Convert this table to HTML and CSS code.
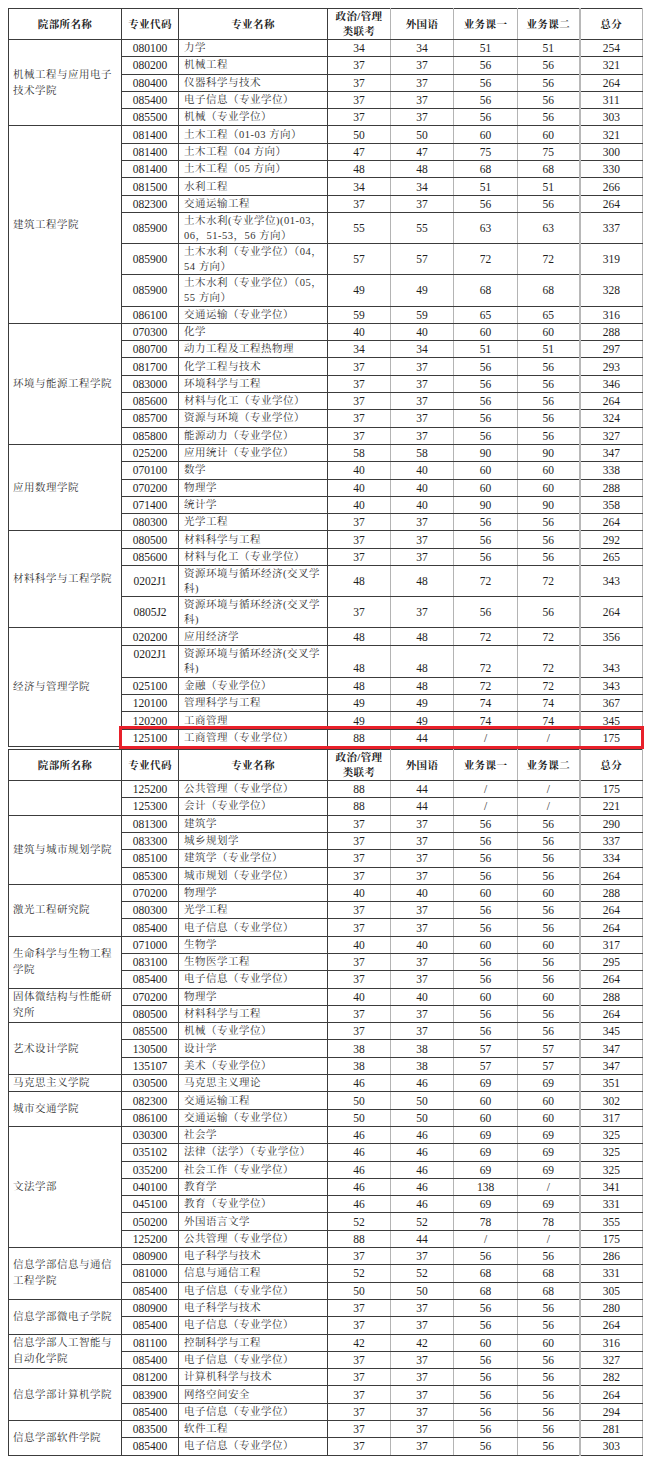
FILE: index.html
```html
<!DOCTYPE html>
<html lang="zh-CN">
<head>
<meta charset="utf-8">
<title>分数线</title>
<link rel="stylesheet" href="styles.css">
</head>
<body>
<div class="page">
<table class="tbl">
<colgroup><col class="w1"><col class="w2"><col class="w3"><col class="w4"><col class="w5"><col class="w6"><col class="w7"><col class="w8"></colgroup>
<thead>
<tr class="h"><th class="cg">院部所名称</th><th class="cd">专业代码</th><th class="nmh">专业名称</th><th class="n">政治/管理<br>类联考</th><th class="n">外国语</th><th class="n">业务课一</th><th class="n">业务课二</th><th class="n t">总分</th></tr>
</thead>
<tbody>
<tr class="s"><td class="cg" rowspan="5">机械工程与应用电子<br>技术学院</td><td class="cd">080100</td><td class="nm">力学</td><td class="n">34</td><td class="n">34</td><td class="n">51</td><td class="n">51</td><td class="n t">254</td></tr>
<tr class="s"><td class="cd">080200</td><td class="nm">机械工程</td><td class="n">37</td><td class="n">37</td><td class="n">56</td><td class="n">56</td><td class="n t">321</td></tr>
<tr class="s"><td class="cd">080400</td><td class="nm">仪器科学与技术</td><td class="n">37</td><td class="n">37</td><td class="n">56</td><td class="n">56</td><td class="n t">264</td></tr>
<tr class="s"><td class="cd">085400</td><td class="nm">电子信息（专业学位）</td><td class="n">37</td><td class="n">37</td><td class="n">56</td><td class="n">56</td><td class="n t">311</td></tr>
<tr class="s"><td class="cd">085500</td><td class="nm">机械（专业学位）</td><td class="n">37</td><td class="n">37</td><td class="n">56</td><td class="n">56</td><td class="n t">303</td></tr>

<tr class="s"><td class="cg" rowspan="9">建筑工程学院</td><td class="cd">081400</td><td class="nm">土木工程（01-03 方向）</td><td class="n">50</td><td class="n">50</td><td class="n">60</td><td class="n">60</td><td class="n t">321</td></tr>
<tr class="s"><td class="cd">081400</td><td class="nm">土木工程（04 方向）</td><td class="n">47</td><td class="n">47</td><td class="n">75</td><td class="n">75</td><td class="n t">300</td></tr>
<tr class="s"><td class="cd">081400</td><td class="nm">土木工程（05 方向）</td><td class="n">48</td><td class="n">48</td><td class="n">68</td><td class="n">68</td><td class="n t">330</td></tr>
<tr class="s"><td class="cd">081500</td><td class="nm">水利工程</td><td class="n">34</td><td class="n">34</td><td class="n">51</td><td class="n">51</td><td class="n t">266</td></tr>
<tr class="s"><td class="cd">082300</td><td class="nm">交通运输工程</td><td class="n">37</td><td class="n">37</td><td class="n">56</td><td class="n">56</td><td class="n t">264</td></tr>
<tr class="d"><td class="cd">085900</td><td class="nm">土木水利(专业学位)(01-03，<br>06，51-53，56 方向）</td><td class="n">55</td><td class="n">55</td><td class="n">63</td><td class="n">63</td><td class="n t">337</td></tr>
<tr class="d"><td class="cd">085900</td><td class="nm">土木水利（专业学位）（04，<br>54 方向）</td><td class="n">57</td><td class="n">57</td><td class="n">72</td><td class="n">72</td><td class="n t">319</td></tr>
<tr class="d"><td class="cd">085900</td><td class="nm">土木水利（专业学位）（05，<br>55 方向）</td><td class="n">49</td><td class="n">49</td><td class="n">68</td><td class="n">68</td><td class="n t">328</td></tr>
<tr class="s"><td class="cd">086100</td><td class="nm">交通运输（专业学位）</td><td class="n">59</td><td class="n">59</td><td class="n">65</td><td class="n">65</td><td class="n t">316</td></tr>

<tr class="s"><td class="cg" rowspan="7">环境与能源工程学院</td><td class="cd">070300</td><td class="nm">化学</td><td class="n">40</td><td class="n">40</td><td class="n">60</td><td class="n">60</td><td class="n t">288</td></tr>
<tr class="s"><td class="cd">080700</td><td class="nm">动力工程及工程热物理</td><td class="n">34</td><td class="n">34</td><td class="n">51</td><td class="n">51</td><td class="n t">297</td></tr>
<tr class="s"><td class="cd">081700</td><td class="nm">化学工程与技术</td><td class="n">37</td><td class="n">37</td><td class="n">56</td><td class="n">56</td><td class="n t">293</td></tr>
<tr class="s"><td class="cd">083000</td><td class="nm">环境科学与工程</td><td class="n">37</td><td class="n">37</td><td class="n">56</td><td class="n">56</td><td class="n t">346</td></tr>
<tr class="s"><td class="cd">085600</td><td class="nm">材料与化工（专业学位）</td><td class="n">37</td><td class="n">37</td><td class="n">56</td><td class="n">56</td><td class="n t">264</td></tr>
<tr class="s"><td class="cd">085700</td><td class="nm">资源与环境（专业学位）</td><td class="n">37</td><td class="n">37</td><td class="n">56</td><td class="n">56</td><td class="n t">324</td></tr>
<tr class="s"><td class="cd">085800</td><td class="nm">能源动力（专业学位）</td><td class="n">37</td><td class="n">37</td><td class="n">56</td><td class="n">56</td><td class="n t">327</td></tr>

<tr class="s"><td class="cg" rowspan="5">应用数理学院</td><td class="cd">025200</td><td class="nm">应用统计（专业学位）</td><td class="n">58</td><td class="n">58</td><td class="n">90</td><td class="n">90</td><td class="n t">347</td></tr>
<tr class="s"><td class="cd">070100</td><td class="nm">数学</td><td class="n">40</td><td class="n">40</td><td class="n">60</td><td class="n">60</td><td class="n t">338</td></tr>
<tr class="s"><td class="cd">070200</td><td class="nm">物理学</td><td class="n">40</td><td class="n">40</td><td class="n">60</td><td class="n">60</td><td class="n t">288</td></tr>
<tr class="s"><td class="cd">071400</td><td class="nm">统计学</td><td class="n">40</td><td class="n">40</td><td class="n">90</td><td class="n">90</td><td class="n t">358</td></tr>
<tr class="s"><td class="cd">080300</td><td class="nm">光学工程</td><td class="n">37</td><td class="n">37</td><td class="n">56</td><td class="n">56</td><td class="n t">264</td></tr>

<tr class="s"><td class="cg" rowspan="4">材料科学与工程学院</td><td class="cd">080500</td><td class="nm">材料科学与工程</td><td class="n">37</td><td class="n">37</td><td class="n">56</td><td class="n">56</td><td class="n t">292</td></tr>
<tr class="s"><td class="cd">085600</td><td class="nm">材料与化工（专业学位）</td><td class="n">37</td><td class="n">37</td><td class="n">56</td><td class="n">56</td><td class="n t">265</td></tr>
<tr class="d"><td class="cd">0202J1</td><td class="nm">资源环境与循环经济(交叉学<br>科)</td><td class="n">48</td><td class="n">48</td><td class="n">72</td><td class="n">72</td><td class="n t">343</td></tr>
<tr class="d"><td class="cd">0805J2</td><td class="nm">资源环境与循环经济(交叉学<br>科)</td><td class="n">37</td><td class="n">37</td><td class="n">56</td><td class="n">56</td><td class="n t">264</td></tr>

<tr class="s"><td class="cg" rowspan="6">经济与管理学院</td><td class="cd">020200</td><td class="nm">应用经济学</td><td class="n">48</td><td class="n">48</td><td class="n">72</td><td class="n">72</td><td class="n t">356</td></tr>
<tr class="d low"><td class="cd">0202J1</td><td class="nm">资源环境与循环经济(交叉学<br>科)</td><td class="n">48</td><td class="n">48</td><td class="n">72</td><td class="n">72</td><td class="n t">343</td></tr>
<tr class="s"><td class="cd">025100</td><td class="nm">金融（专业学位）</td><td class="n">48</td><td class="n">48</td><td class="n">72</td><td class="n">72</td><td class="n t">343</td></tr>
<tr class="s"><td class="cd">120100</td><td class="nm">管理科学与工程</td><td class="n">49</td><td class="n">49</td><td class="n">74</td><td class="n">74</td><td class="n t">367</td></tr>
<tr class="s"><td class="cd">120200</td><td class="nm">工商管理</td><td class="n">49</td><td class="n">49</td><td class="n">74</td><td class="n">74</td><td class="n t">345</td></tr>
<tr class="s"><td class="cd">125100</td><td class="nm">工商管理（专业学位）</td><td class="n">88</td><td class="n">44</td><td class="n">/</td><td class="n">/</td><td class="n t">175</td></tr>
</tbody>
</table>

<table class="tbl second">
<colgroup><col class="w1"><col class="w2"><col class="w3"><col class="w4"><col class="w5"><col class="w6"><col class="w7"><col class="w8"></colgroup>
<thead>
<tr class="h"><th class="cg">院部所名称</th><th class="cd">专业代码</th><th class="nmh">专业名称</th><th class="n">政治/管理<br>类联考</th><th class="n">外国语</th><th class="n">业务课一</th><th class="n">业务课二</th><th class="n t">总分</th></tr>
</thead>
<tbody>
<tr class="s"><td class="cg" rowspan="2"></td><td class="cd">125200</td><td class="nm">公共管理（专业学位）</td><td class="n">88</td><td class="n">44</td><td class="n">/</td><td class="n">/</td><td class="n t">175</td></tr>
<tr class="s"><td class="cd">125300</td><td class="nm">会计（专业学位）</td><td class="n">88</td><td class="n">44</td><td class="n">/</td><td class="n">/</td><td class="n t">221</td></tr>

<tr class="s"><td class="cg" rowspan="4">建筑与城市规划学院</td><td class="cd">081300</td><td class="nm">建筑学</td><td class="n">37</td><td class="n">37</td><td class="n">56</td><td class="n">56</td><td class="n t">290</td></tr>
<tr class="s"><td class="cd">083300</td><td class="nm">城乡规划学</td><td class="n">37</td><td class="n">37</td><td class="n">56</td><td class="n">56</td><td class="n t">337</td></tr>
<tr class="s"><td class="cd">085100</td><td class="nm">建筑学（专业学位）</td><td class="n">37</td><td class="n">37</td><td class="n">56</td><td class="n">56</td><td class="n t">334</td></tr>
<tr class="s"><td class="cd">085300</td><td class="nm">城市规划（专业学位）</td><td class="n">37</td><td class="n">37</td><td class="n">56</td><td class="n">56</td><td class="n t">264</td></tr>

<tr class="s"><td class="cg" rowspan="3">激光工程研究院</td><td class="cd">070200</td><td class="nm">物理学</td><td class="n">40</td><td class="n">40</td><td class="n">60</td><td class="n">60</td><td class="n t">288</td></tr>
<tr class="s"><td class="cd">080300</td><td class="nm">光学工程</td><td class="n">37</td><td class="n">37</td><td class="n">56</td><td class="n">56</td><td class="n t">264</td></tr>
<tr class="s"><td class="cd">085400</td><td class="nm">电子信息（专业学位）</td><td class="n">37</td><td class="n">37</td><td class="n">56</td><td class="n">56</td><td class="n t">264</td></tr>

<tr class="s"><td class="cg" rowspan="3">生命科学与生物工程<br>学院</td><td class="cd">071000</td><td class="nm">生物学</td><td class="n">40</td><td class="n">40</td><td class="n">60</td><td class="n">60</td><td class="n t">317</td></tr>
<tr class="s"><td class="cd">083100</td><td class="nm">生物医学工程</td><td class="n">37</td><td class="n">37</td><td class="n">56</td><td class="n">56</td><td class="n t">295</td></tr>
<tr class="s"><td class="cd">085400</td><td class="nm">电子信息（专业学位）</td><td class="n">37</td><td class="n">37</td><td class="n">56</td><td class="n">56</td><td class="n t">264</td></tr>

<tr class="s"><td class="cg" rowspan="2">固体微结构与性能研<br>究所</td><td class="cd">070200</td><td class="nm">物理学</td><td class="n">40</td><td class="n">40</td><td class="n">60</td><td class="n">60</td><td class="n t">288</td></tr>
<tr class="s"><td class="cd">080500</td><td class="nm">材料科学与工程</td><td class="n">37</td><td class="n">37</td><td class="n">56</td><td class="n">56</td><td class="n t">264</td></tr>

<tr class="s"><td class="cg" rowspan="3">艺术设计学院</td><td class="cd">085500</td><td class="nm">机械（专业学位）</td><td class="n">37</td><td class="n">37</td><td class="n">56</td><td class="n">56</td><td class="n t">345</td></tr>
<tr class="s"><td class="cd">130500</td><td class="nm">设计学</td><td class="n">38</td><td class="n">38</td><td class="n">57</td><td class="n">57</td><td class="n t">347</td></tr>
<tr class="s"><td class="cd">135107</td><td class="nm">美术（专业学位）</td><td class="n">38</td><td class="n">38</td><td class="n">57</td><td class="n">57</td><td class="n t">347</td></tr>

<tr class="s"><td class="cg">马克思主义学院</td><td class="cd">030500</td><td class="nm">马克思主义理论</td><td class="n">46</td><td class="n">46</td><td class="n">69</td><td class="n">69</td><td class="n t">351</td></tr>

<tr class="s"><td class="cg" rowspan="2">城市交通学院</td><td class="cd">082300</td><td class="nm">交通运输工程</td><td class="n">50</td><td class="n">50</td><td class="n">60</td><td class="n">60</td><td class="n t">302</td></tr>
<tr class="s"><td class="cd">086100</td><td class="nm">交通运输（专业学位）</td><td class="n">50</td><td class="n">50</td><td class="n">60</td><td class="n">60</td><td class="n t">317</td></tr>

<tr class="s"><td class="cg" rowspan="7">文法学部</td><td class="cd">030300</td><td class="nm">社会学</td><td class="n">46</td><td class="n">46</td><td class="n">69</td><td class="n">69</td><td class="n t">325</td></tr>
<tr class="s"><td class="cd">035102</td><td class="nm">法律（法学）（专业学位）</td><td class="n">46</td><td class="n">46</td><td class="n">69</td><td class="n">69</td><td class="n t">325</td></tr>
<tr class="s"><td class="cd">035200</td><td class="nm">社会工作（专业学位）</td><td class="n">46</td><td class="n">46</td><td class="n">69</td><td class="n">69</td><td class="n t">325</td></tr>
<tr class="s"><td class="cd">040100</td><td class="nm">教育学</td><td class="n">46</td><td class="n">46</td><td class="n">138</td><td class="n">/</td><td class="n t">341</td></tr>
<tr class="s"><td class="cd">045100</td><td class="nm">教育（专业学位）</td><td class="n">46</td><td class="n">46</td><td class="n">69</td><td class="n">69</td><td class="n t">331</td></tr>
<tr class="s"><td class="cd">050200</td><td class="nm">外国语言文学</td><td class="n">52</td><td class="n">52</td><td class="n">78</td><td class="n">78</td><td class="n t">355</td></tr>
<tr class="s"><td class="cd">125200</td><td class="nm">公共管理（专业学位）</td><td class="n">88</td><td class="n">44</td><td class="n">/</td><td class="n">/</td><td class="n t">175</td></tr>

<tr class="s"><td class="cg" rowspan="3">信息学部信息与通信<br>工程学院</td><td class="cd">080900</td><td class="nm">电子科学与技术</td><td class="n">37</td><td class="n">37</td><td class="n">56</td><td class="n">56</td><td class="n t">286</td></tr>
<tr class="s"><td class="cd">081000</td><td class="nm">信息与通信工程</td><td class="n">52</td><td class="n">52</td><td class="n">68</td><td class="n">68</td><td class="n t">331</td></tr>
<tr class="s"><td class="cd">085400</td><td class="nm">电子信息（专业学位）</td><td class="n">50</td><td class="n">50</td><td class="n">68</td><td class="n">68</td><td class="n t">305</td></tr>

<tr class="s"><td class="cg" rowspan="2">信息学部微电子学院</td><td class="cd">080900</td><td class="nm">电子科学与技术</td><td class="n">37</td><td class="n">37</td><td class="n">56</td><td class="n">56</td><td class="n t">280</td></tr>
<tr class="s"><td class="cd">085400</td><td class="nm">电子信息（专业学位）</td><td class="n">37</td><td class="n">37</td><td class="n">56</td><td class="n">56</td><td class="n t">264</td></tr>

<tr class="s"><td class="cg" rowspan="2">信息学部人工智能与<br>自动化学院</td><td class="cd">081100</td><td class="nm">控制科学与工程</td><td class="n">42</td><td class="n">42</td><td class="n">60</td><td class="n">60</td><td class="n t">316</td></tr>
<tr class="s"><td class="cd">085400</td><td class="nm">电子信息（专业学位）</td><td class="n">37</td><td class="n">37</td><td class="n">56</td><td class="n">56</td><td class="n t">327</td></tr>

<tr class="s"><td class="cg" rowspan="3">信息学部计算机学院</td><td class="cd">081200</td><td class="nm">计算机科学与技术</td><td class="n">37</td><td class="n">37</td><td class="n">56</td><td class="n">56</td><td class="n t">282</td></tr>
<tr class="s"><td class="cd">083900</td><td class="nm">网络空间安全</td><td class="n">37</td><td class="n">37</td><td class="n">56</td><td class="n">56</td><td class="n t">264</td></tr>
<tr class="s"><td class="cd">085400</td><td class="nm">电子信息（专业学位）</td><td class="n">37</td><td class="n">37</td><td class="n">56</td><td class="n">56</td><td class="n t">294</td></tr>

<tr class="s"><td class="cg" rowspan="2">信息学部软件学院</td><td class="cd">083500</td><td class="nm">软件工程</td><td class="n">37</td><td class="n">37</td><td class="n">56</td><td class="n">56</td><td class="n t">281</td></tr>
<tr class="s"><td class="cd">085400</td><td class="nm">电子信息（专业学位）</td><td class="n">37</td><td class="n">37</td><td class="n">56</td><td class="n">56</td><td class="n t">303</td></tr>
</tbody>
</table>
<div class="mark"></div>
</div>
</body>
</html>
```

FILE: styles.css
```css
html, body {
  margin: 0;
  padding: 0;
  background: #ffffff;
}

.page {
  position: relative;
  padding: 8px 8px 0 8px;
  width: 634px;
}

.tbl {
  border-collapse: collapse;
  table-layout: fixed;
  width: 634px;
  font-family: "Liberation Serif", "Noto Serif CJK SC", "Noto Sans CJK SC", serif;
  color: #1e1e1e;
}

.second {
  margin-top: 2px;
}

.w1 { width: 113px; }
.w2 { width: 57px; }
.w3 { width: 149px; }
.w4 { width: 63px; }
.w5 { width: 63px; }
.w6 { width: 64px; }
.w7 { width: 62px; }
.w8 { width: 63px; }

.tbl th,
.tbl td {
  border: 1px solid #3c3c3c;
  padding: 0;
  vertical-align: middle;
  white-space: nowrap;
  overflow: hidden;
}

.tbl th {
  height: 30px;
  font-size: 10.5px;
  font-weight: bold;
  line-height: 15px;
  letter-spacing: 0.4px;
  text-align: center;
  color: #222;
}

.tbl .n {
  border-left: 1px solid #b4b4b4;
  border-right: 1px solid #b4b4b4;
  text-align: center;
}

.tbl .t {
  border-left: 2px solid #b8b8b8;
}

.s td {
  height: 16.3px;
  line-height: 14px;
}

.d td {
  height: 30.2px;
  line-height: 15px;
}

.cg {
  text-align: left;
  padding-left: 4px !important;
  font-size: 10.5px;
  letter-spacing: 0.5px;
  line-height: 16px !important;
  color: #333;
}

.tbl th.cg {
  text-align: center;
  padding-left: 0 !important;
  line-height: 15px !important;
}

td.cd {
  text-align: center;
  font-size: 11.5px;
}

td.nm {
  text-align: left;
  padding-left: 5px;
  font-size: 10.5px;
  letter-spacing: 0.5px;
  color: #333;
}

td.n {
  font-size: 11.5px;
}

.low td.cd {
  vertical-align: top;
  padding-top: 1px;
}

.low td.n {
  vertical-align: bottom;
  padding-bottom: 1px;
}

.mark {
  position: absolute;
  left: 119px;
  top: 726px;
  width: 519px;
  height: 17px;
  border: 3px solid #e8202a;
  pointer-events: none;
}
```
